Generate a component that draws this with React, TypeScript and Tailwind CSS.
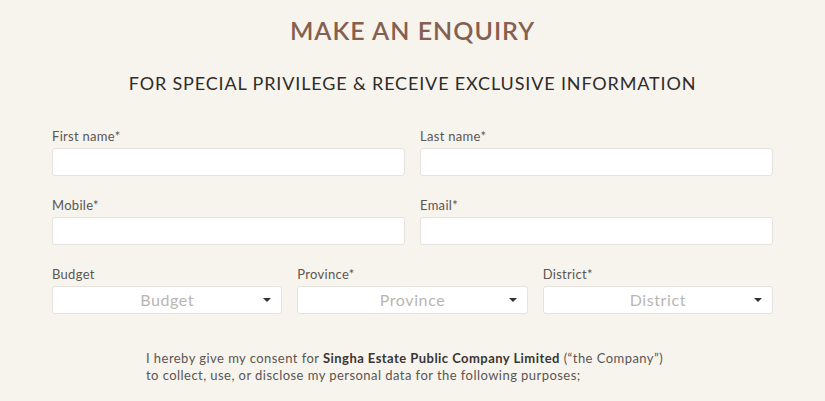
const font = { fontFamily: '"Lato", "Liberation Sans", sans-serif' }

function Field({ label }: { label: string }) {
  return (
    <div className="flex flex-col">
      <label className="text-[13px] leading-[16px] text-[#5a5652] tracking-[0.3px]">{label}</label>
      <input className="mt-[4px] h-[28px] w-full rounded-[3px] border border-[#e6e3de] bg-white outline-none" />
    </div>
  )
}

function SelectField({ label, placeholder }: { label: string; placeholder: string }) {
  return (
    <div className="flex flex-col">
      <label className="text-[13px] leading-[16px] text-[#5a5652] tracking-[0.3px]">{label}</label>
      <div className="mt-[4px] flex h-[28px] items-center rounded-[3px] border border-[#e6e3de] bg-white pl-[18px] pr-[10px]">
        <span className="flex-1 text-center text-[16px] text-[#b9b6b2] tracking-[0.6px]">{placeholder}</span>
        <span className="h-0 w-0 border-x-[4px] border-t-[4px] border-x-transparent border-t-[#333]" />
      </div>
    </div>
  )
}

export default function App() {
  return (
    <div className="min-h-[401px] w-full bg-[#f7f4ee] px-[52px]" style={font}>
      {/* HEADER */}
      <div className="pt-[15px] text-center">
        <h1 className="text-[25px] leading-[30px] font-semibold tracking-[1px] text-[#85604f]">MAKE AN ENQUIRY</h1>
        <p className="mt-[27px] text-[18px] leading-[22px] tracking-[0.85px] text-[#2f2c2a]">
          FOR SPECIAL PRIVILEGE &amp; RECEIVE EXCLUSIVE INFORMATION
        </p>
      </div>

      {/* FORM */}
      <div className="mt-[34px] grid grid-cols-2 gap-x-[15px] gap-y-[21px]">
        <Field label="First name*" />
        <Field label="Last name*" />
        <Field label="Mobile*" />
        <Field label="Email*" />
      </div>

      <div className="mt-[21px] grid grid-cols-3 gap-x-[15px]">
        <SelectField label="Budget" placeholder="Budget" />
        <SelectField label="Province*" placeholder="Province" />
        <SelectField label="District*" placeholder="District" />
      </div>

      {/* CONSENT */}
      <div className="mt-[36px] pl-[94px] text-[13px] leading-[17px] tracking-[0.45px] text-[#5a5652]">
        <p>
          I hereby give my consent for <b className="font-bold text-[#3a3633]">Singha Estate Public Company Limited</b> (“the Company”)
          <br />
          to collect, use, or disclose my personal data for the following purposes;
        </p>
      </div>
    </div>
  )
}
